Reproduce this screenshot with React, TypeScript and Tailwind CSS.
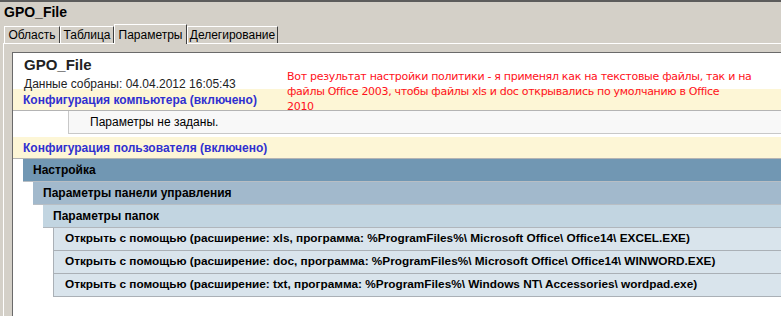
const TABS = [
  { id: "scope", label: "Область", w: "w-[56px]" },
  { id: "table", label: "Таблица", w: "w-[54px]" },
  { id: "params", label: "Параметры", w: "w-[73px]", active: true },
  { id: "deleg", label: "Делегирование", w: "w-[91px]" },
]

const OPEN_WITH = [
  "Открыть с помощью (расширение: xls, программа: %ProgramFiles%\\ Microsoft Office\\ Office14\\ EXCEL.EXE)",
  "Открыть с помощью (расширение: doc, программа: %ProgramFiles%\\ Microsoft Office\\ Office14\\ WINWORD.EXE)",
  "Открыть с помощью (расширение: txt, программа: %ProgramFiles%\\ Windows NT\\ Accessories\\ wordpad.exe)",
]

const NOTE = [
  "Вот результат настройки политики - я применял как на текстовые файлы, так и на",
  "файлы Office 2003, чтобы файлы xls и doc открывались по умолчанию в Office",
  "2010",
]

function Tab({ label, w, active }: { label: string; w: string; active?: boolean }) {
  if (active) {
    return (
      <div
        className={`${w} h-[20px] -mb-px border-t border-l border-white border-r border-r-[#404040] bg-[#d4d0c8] flex items-center justify-center text-[12px] relative z-10`}
      >
        {label}
      </div>
    )
  }
  return (
    <div
      className={`${w} h-[17px] border-t border-l border-white border-r border-r-[#404040] flex items-center justify-center text-[12px]`}
    >
      {label}
    </div>
  )
}

function SectionBar({ children }: { children: string }) {
  return (
    <div className="h-[22px] bg-[#fdf6d6] border-b border-[#b4b4b4] flex items-center pl-[10px] text-[12px] font-bold text-[#3030d0]">
      {children}
    </div>
  )
}

export default function App() {
  return (
    <div className="w-[781px] h-[316px] overflow-hidden bg-[#d4d0c8] border-t-2 border-[#5c5c5c] text-black font-['Liberation_Sans',Arial,sans-serif]">
      <div className="h-[22px] pl-[4px] text-[14px] font-bold">GPO_File</div>

      {/* tabs */}
      <div className="flex items-end pl-[4px] h-[19px]">
        {TABS.map((t) => (
          <Tab key={t.id} label={t.label} w={t.w} active={t.active} />
        ))}
      </div>

      {/* tab panel */}
      <div className="border-t border-white ml-[3px] border-l h-full">
        <div className="mt-[8px] ml-[8px] border-t border-l border-[#6a6a6a] bg-white h-full relative">
          <div className="h-[36px] pl-[11px] pt-[3px]">
            <div className="text-[15px] font-bold leading-[17px] text-[#222]">GPO_File</div>
            <div className="text-[12px] leading-[14px] mt-[4px] text-[#222]">Данные собраны: 04.04.2012 16:05:43</div>
          </div>

          <SectionBar>Конфигурация компьютера (включено)</SectionBar>

          <div className="ml-[55px] h-[23px] bg-[#f8f8f8] border-l border-b border-[#c8c8c8] flex items-center pl-[21px] text-[12px]">
            Параметры не заданы.
          </div>

          <div className="h-[3px]" />

          <SectionBar>Конфигурация пользователя (включено)</SectionBar>

          <div className="ml-[10px] h-[23px] bg-[#7197b3] border-b border-[#b8bec4] flex items-center pl-[10px] text-[12px] font-bold">
            Настройка
          </div>
          <div className="ml-[20px] h-[23px] bg-[#a2b9cc] border-b border-[#b8bec4] flex items-center pl-[10px] text-[12px] font-bold">
            Параметры панели управления
          </div>
          <div className="ml-[30px] h-[23px] bg-[#c2d5e1] border-b border-[#b0b6bc] flex items-center pl-[10px] text-[12px] font-bold">
            Параметры папок
          </div>
          {OPEN_WITH.map((row) => (
            <div
              key={row}
              className="ml-[40px] h-[23px] bg-[#d9e4ec] border-b border-l border-[#aab0b6] flex items-center pl-[11px] text-[11.8px] font-bold whitespace-nowrap"
            >
              {row}
            </div>
          ))}

          {/* annotation drawn over the report */}
          <div className="absolute left-[274px] top-[16px] text-[11px] leading-[15px] text-[#ff1020] font-['DejaVu_Sans',sans-serif] tracking-[-0.3px]">
            {NOTE.map((line) => (
              <div key={line} className="whitespace-nowrap">
                {line}
              </div>
            ))}
          </div>
        </div>
      </div>
    </div>
  )
}
